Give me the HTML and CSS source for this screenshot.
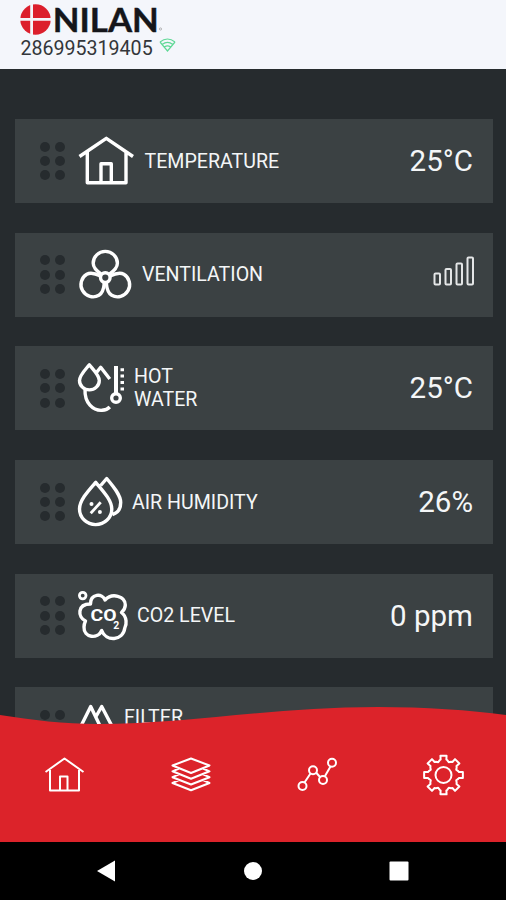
FILE: index.html
```html
<!DOCTYPE html>
<html lang="en">
<head>
  <meta charset="UTF-8">
  <meta name="viewport" content="width=device-width, initial-scale=1">
  <title>Nilan</title>
  <link rel="stylesheet" href="styles.css">
</head>
<body>
<div class="app">

  <header class="header">
    <svg class="logo" width="146" height="34" viewBox="0 0 146 34">
      <circle cx="15.500" cy="16.500" r="15.200" fill="#dc1f2c"/>
      <path d="M11.600 0V33M0 16.300H32" stroke="#f4f6fb" stroke-width="2.800"/>
      <text class="logo-name" x="32.800" y="28.500" textLength="106" lengthAdjust="spacingAndGlyphs">NILAN</text>
      <circle cx="140.500" cy="26" r="1.100" fill="none" stroke="#999" stroke-width=".7"/>
    </svg>
    <div class="device">
      <span>286995319405</span>
      <svg class="wifi" width="17" height="14" viewBox="0 0 17 14">
        <path d="M1 4Q8.500-2 16 4M3.200 6.500Q8.500 2.200 13.800 6.500M5.400 9Q8.500 6.600 11.600 9M1 4L8.500 13L16 4" />
      </svg>
    </div>
  </header>

  <main class="list">
    <div class="card">
      <div class="grip"><i></i><i></i><i></i><i></i><i></i><i></i></div>
      <svg class="icon" width="56.500" height="52" viewBox="0 0 56.500 52">
        <path d="M1.500 21.500L28.300 3.300L55 21.500M9.300 17V47.700H48V17M23 47.700V28.700H33.300V47.700"/>
      </svg>
      <span class="label">TEMPERATURE</span>
      <span class="value">25°C</span>
    </div>

    <div class="card">
      <div class="grip"><i></i><i></i><i></i><i></i><i></i><i></i></div>
      <svg class="icon" width="54" height="52" viewBox="0 0 54 52">
        <circle cx="27.300" cy="28.600" r="4.800"/>
        <path id="blade" d="M23.500 25.300C18 21.500 15.200 18 15.200 14.200A12.100 11.800 0 0 1 39.400 14.200C39.400 18 36.600 21.500 31.100 25.300"/>
        <use href="#blade" transform="rotate(120 27.300 28.600)"/>
        <use href="#blade" transform="rotate(240 27.300 28.600)"/>
      </svg>
      <span class="label">VENTILATION</span>
      <svg class="level" width="42" height="38" viewBox="0 0 42 38">
        <rect x="1.500" y="17.500" width="5.500" height="11" rx="1"/>
        <rect x="12.500" y="13" width="5.500" height="15.500" rx="1"/>
        <rect x="23.500" y="7.500" width="5.500" height="21" rx="1"/>
        <rect x="34.500" y="1.500" width="5.500" height="27" rx="1"/>
      </svg>
    </div>

    <div class="card">
      <div class="grip"><i></i><i></i><i></i><i></i><i></i><i></i></div>
      <svg class="icon" width="46" height="52" viewBox="0 0 46 52">
        <path d="M11.300 2.800C7 8 1.500 13.500 1.500 18.500A9.800 9.300 0 0 0 21.300 18.500C21.300 13.500 15.500 8 11.300 2.800ZM18.500 10.500L22.700 5.300L31.800 17M7 27.500C6.500 41 15 48.800 24 48.300Q29 48 31.800 45"/>
        <path d="M38 4V31" stroke-width="4"/>
        <circle cx="38" cy="36" r="4.300"/>
        <path d="M42.500 7.700H46M42.500 14H46M42.500 20.500H46M42.500 27H46" stroke-width="3"/>
      </svg>
      <span class="label">HOT<br>WATER</span>
      <span class="value">25°C</span>
    </div>

    <div class="card">
      <div class="grip"><i></i><i></i><i></i><i></i><i></i><i></i></div>
      <svg class="icon" width="44" height="52" viewBox="0 0 44 52">
        <path d="M17.700 6.300C11 14 1.500 24 1.500 33A16 15.500 0 0 0 33.800 33C33.800 24 24 14 17.700 6.300ZM22.700 9.500L28.700 2.500C35 10 42.700 19 42.700 26.500C42.700 32.500 39.500 37 34.500 38.500"/>
        <path class="slash" d="M12.700 37.300L22.700 26.300"/>
        <circle class="dot" cx="13.500" cy="28" r="2"/>
        <circle class="dot" cx="21.900" cy="36" r="2"/>
      </svg>
      <span class="label">AIR HUMIDITY</span>
      <span class="value">26%</span>
    </div>

    <div class="card">
      <div class="grip"><i></i><i></i><i></i><i></i><i></i><i></i></div>
      <svg class="icon" width="49" height="52" viewBox="0 0 49 52">
        <circle cx="4.700" cy="5.600" r="3.300" stroke-width="2.800"/>
        <path d="M12.500 14C12.500 3.500 24.500 3 27 10C34 2.500 47.300 6 47.300 15Q47.300 19 43.500 22.500C49.500 27 48.500 35 46.800 38C45 51 28 52 23.700 40.500C20 49.500 5.500 48 6 37Q6 34 7.500 31C-.500 27 -1 14 12.500 14Z"/>
        <text class="co" x="12.600" y="31" textLength="26" lengthAdjust="spacingAndGlyphs">CO</text>
        <text class="co-sub" x="35.200" y="39">2</text>
      </svg>
      <span class="label">CO2 LEVEL</span>
      <span class="value">0 ppm</span>
    </div>

    <div class="card">
      <div class="grip"><i></i><i></i><i></i><i></i><i></i><i></i></div>
      <svg class="icon" width="36" height="52" viewBox="0 0 36 52">
        <path d="M1 27L12.700 3.500L24 27M18 13.500L23.700 3.500L36 27"/>
      </svg>
      <span class="label label-top">FILTER</span>
    </div>
  </main>

  <nav class="tabs">
    <svg class="wave" width="506" height="20" viewBox="0 0 506 20">
      <path d="M0 10C32 15 65 19 97 19C190 19 270 2 378 2C425 2 470 5 506 10V20H0Z"/>
    </svg>
    <div class="tab-row">
      <a class="tab"><svg width="40" height="42" viewBox="0 0 40 42">
        <path d="M.500 18L19.500 4.500L38.500 18M5 16V36.500H34V16M15 36.500V22.500H22.500V36.500"/>
      </svg></a>
      <a class="tab"><svg width="40" height="42" viewBox="0 0 40 42">
        <path d="M20 4.500L38.500 11.500L20 19L1.500 11.500ZM8 14.500L1.500 17.300L20 24.700L38.500 17.300L32 14.500M8 20.300L1.500 23.200L20 30.500L38.500 23.200L32 20.300M8 26.200L1.500 29L20 36.300L38.500 29L32 26.200"/>
      </svg></a>
      <a class="tab"><svg width="40" height="42" viewBox="0 0 40 42">
        <path d="M7.500 28.500L13.500 19.500M19 18.500L23.500 23.500M28 22L33.500 12.500"/>
        <circle cx="5.500" cy="32" r="4"/><circle cx="16" cy="16.300" r="4"/>
        <circle cx="26" cy="26" r="4"/><circle cx="35" cy="8.700" r="4"/>
      </svg></a>
      <a class="tab"><svg width="42" height="42" viewBox="-21.500 -21 42 42">
        <circle r="8"/>
        <path id="gear"/>
      </svg></a>
    </div>
  </nav>

  <footer class="sysbar">
    <svg width="18" height="22" viewBox="0 0 18 22"><path d="M18 .500V21.500L0 11Z"/></svg>
    <svg width="18" height="18" viewBox="0 0 18 18"><circle cx="9" cy="9" r="9"/></svg>
    <svg width="20" height="20" viewBox="0 0 20 20"><rect x=".500" y=".500" width="19" height="19" rx="1"/></svg>
  </footer>

</div>
<script>
  // gear outline: [radius, angle] points of one tooth, repeated every 45 degrees
  const tooth = [[15.2, -15], [15.8, -10.5], [19.6, -9], [19.6, 9], [15.8, 10.5], [15.2, 15], [13.8, 22.5]];
  const points = [];
  for (let i = 0; i < 8; i++) {
    tooth.forEach(([r, a]) => {
      const t = (i * 45 + a) * Math.PI / 180;
      points.push((r * Math.cos(t)).toFixed(2) + " " + (r * Math.sin(t)).toFixed(2));
    });
  }
  document.getElementById("gear").setAttribute("d", "M" + points.join("L") + "Z");
</script>
</body>
</html>
```

FILE: styles.css
```css
* {
  box-sizing: border-box;
}
body {
  margin: 0;
  font-family: Roboto, "Liberation Sans", sans-serif;
  background: #262b2e;
  color: #f4f6f7;
}
svg {
  display: block;
  flex: none;
}
.app {
  display: flex;
  flex-direction: column;
  width: 506px;
  height: 900px;
  overflow: hidden;
}
.header {
  height: 69px;
  padding: 3px 20px 0;
  background: #f4f6fb;
}
.logo {
  overflow: visible;
}
.logo-name {
  font-family: Lato, sans-serif;
  font-size: 32px;
  font-weight: 700;
  fill: #15161a;
  stroke: #15161a;
  stroke-width: .4;
}
.device {
  display: flex;
  gap: 6px;
  color: #33363a;
  font-size: 19.6px;
  line-height: 24px;
}
.device span {
  margin-left: .5px;
}
.wifi {
  margin-top: 1px;
}
.wifi path {
  fill: none;
  stroke: #5fd896;
  stroke-width: 1.2;
}
.list {
  flex: 1;
  min-height: 0;
  overflow: hidden;
  padding: 50px 13px 0 15px;
}
.card {
  display: flex;
  align-items: center;
  height: 84px;
  margin-bottom: 29.7px;
  padding: 0 20px 0 25px;
  background: #3b4143;
}
.grip {
  display: grid;
  grid-template-columns: 10px 10px;
  gap: 4.3px 4.5px;
  margin-right: 13.5px;
}
.grip i {
  width: 10px;
  height: 10px;
  border-radius: 50%;
  background: #262b2e;
}
.icon {
  overflow: visible;
  fill: none;
  stroke: #fff;
  stroke-width: 3.4;
  stroke-linejoin: round;
}
.icon .dot {
  fill: #fff;
  stroke: none;
}
.icon .slash {
  stroke-width: 2.8;
}
.icon text {
  fill: #fff;
  stroke: none;
  font-weight: 700;
}
.icon .co {
  font-size: 16px;
}
.icon .co-sub {
  font-size: 10.5px;
}
.label {
  margin-left: 10px;
  font-size: 19.6px;
  line-height: 23px;
}
.label-top {
  margin-bottom: 23px;
}
.value {
  margin-left: auto;
  font-size: 29.5px;
}
.level {
  margin-left: auto;
  margin-right: -2px;
  fill: none;
  stroke: #e4e6e7;
  stroke-width: 2;
}
.tabs {
  position: relative;
  height: 137px;
  margin-top: -20px;
}
.wave {
  fill: #dc232a;
}
.tab-row {
  display: grid;
  grid-template-columns: repeat(4, 1fr);
  height: 117px;
  padding: 29px 0 0 2px;
  background: #dc232a;
}
.tab {
  display: flex;
  justify-content: center;
}
.tab svg {
  fill: none;
  stroke: #fff;
  stroke-width: 2;
  stroke-linejoin: round;
}
.sysbar {
  display: flex;
  justify-content: space-between;
  align-items: center;
  height: 58px;
  padding: 0 97px;
  background: #000;
}
.sysbar svg {
  fill: #fff;
}
.sysbar svg:nth-child(2) {
  margin-left: 2px;
}
```
